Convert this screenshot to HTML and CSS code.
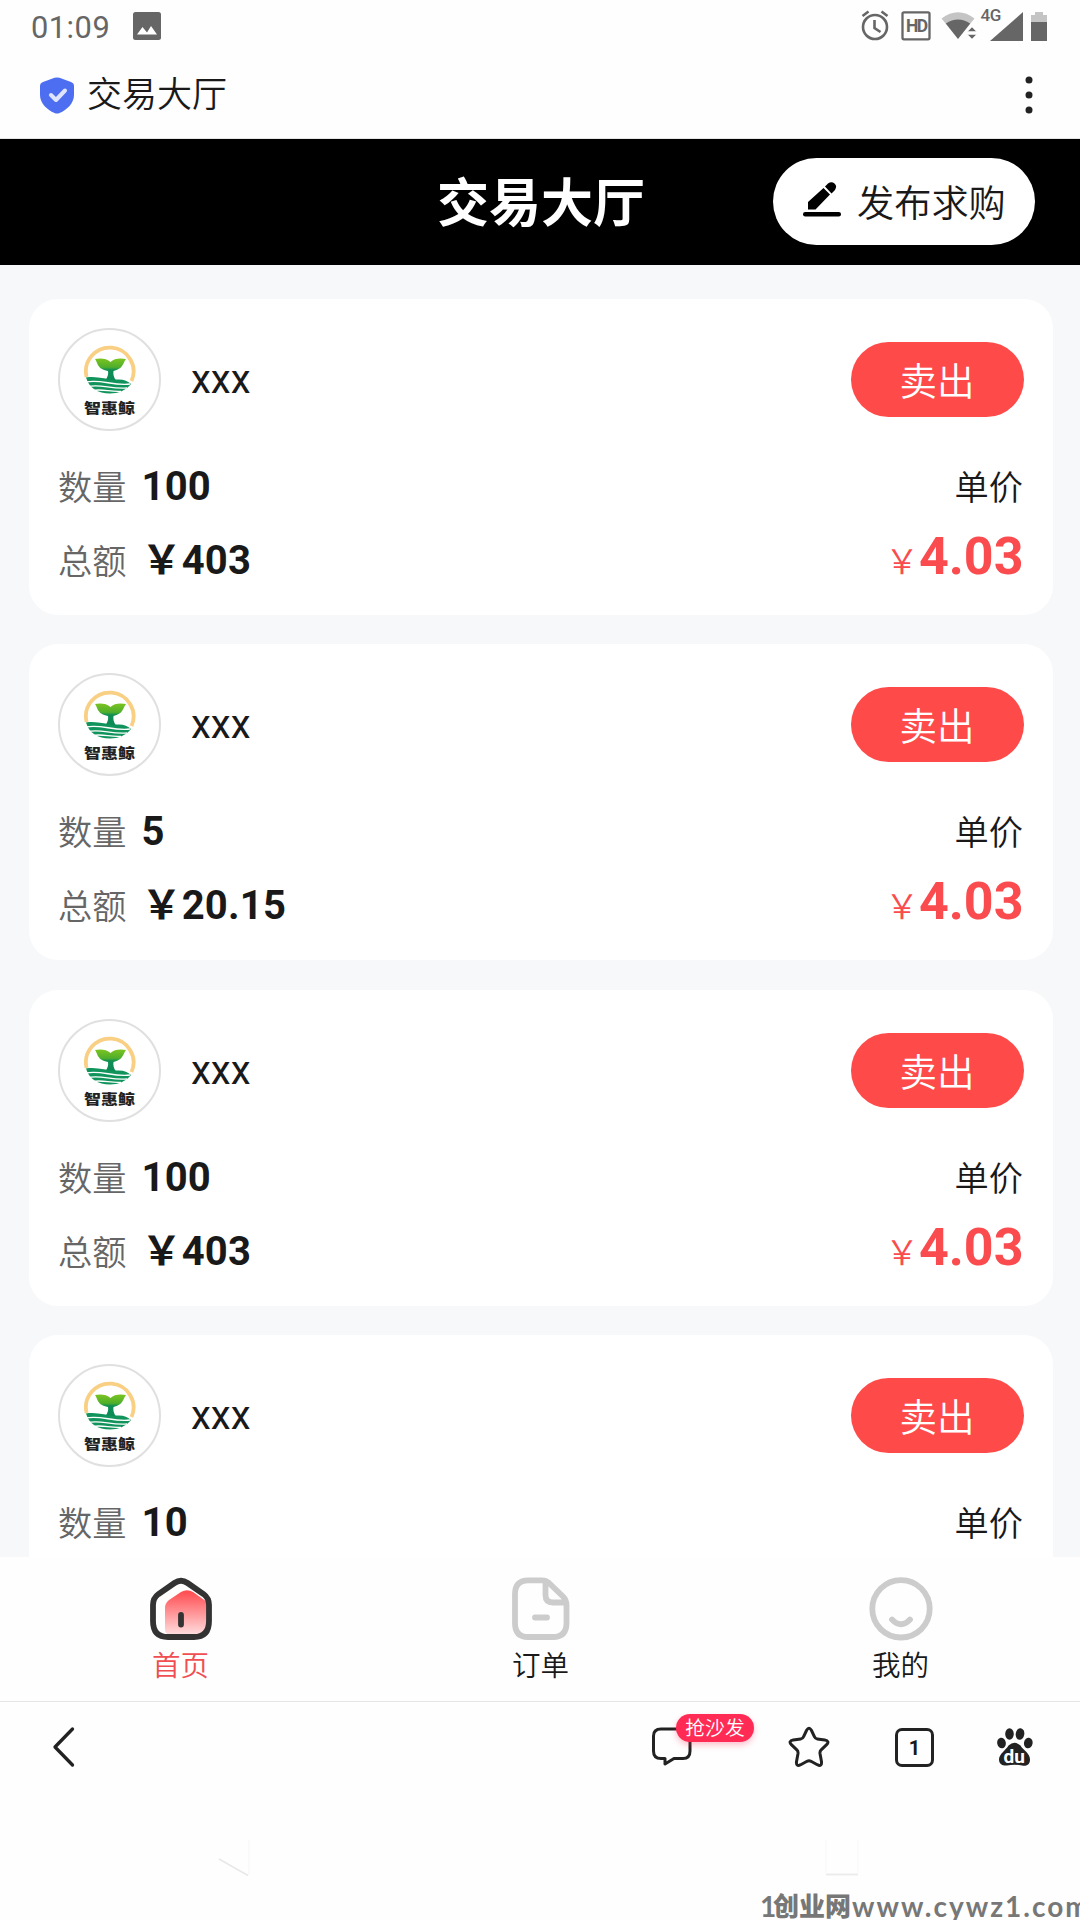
FILE: index.html
```html
<!DOCTYPE html>
<html lang="zh-CN">
<head>
<meta charset="utf-8">
<title>交易大厅</title>
<link rel="stylesheet" href="styles.css">
</head>
<body>
<svg class="defs" width="0" height="0" aria-hidden="true">
  <defs>
    <linearGradient id="leaf" x1="0" y1="0" x2="0" y2="1"><stop offset="0" stop-color="#7cc420"/><stop offset=".4" stop-color="#4fae2c"/><stop offset=".52" stop-color="#0f8f55"/><stop offset="1" stop-color="#0a8a55"/></linearGradient>
    <linearGradient id="roof" x1="0" y1="0" x2="0" y2="1"><stop offset=".05" stop-color="#ff5054"/><stop offset="1" stop-color="#ffdfe0"/></linearGradient>
    <symbol id="logo" viewBox="0 0 54 52">
      <path d="M3.600 35A23.800 23.800 0 1 1 48.500 39" fill="none" stroke="#f9cf83" stroke-width="3.800"/>
      <path d="M3 35.500C14 33.500 24 38 34 37.500C40 37 45 39 48 42C43 48.500 35 51.500 27 51.500C15 51.500 6 46 3 35.500Z" fill="#11935c"/>
      <path d="M3 40C18 37 30 44 47 42M5 44.500C18 41.500 28 47.500 44 46M10 48.500C19 46.500 28 50.300 38 49.300" fill="none" stroke="#fff" stroke-width="1.300"/>
      <path d="M12 17C16 16 24 16 27.500 20C31 16 38 16 43 17C40 21 40 27 30.500 29C30 32 30.500 35 33 38.500L23 37.500C25 34 25.500 32 25 29C14 27 15 21 12 17Z" fill="url(#leaf)"/>
    </symbol>
  </defs>
</svg>
<div class="screen">
  <header class="status">
    <span class="clock">01:09</span>
    <svg class="photo" width="28" height="28" viewBox="0 0 28 28"><rect width="28" height="28" rx="2.500" fill="#666"/><path d="M4 22.500 9.500 15l4.500 5.500L18 14l6 8.500Z" fill="#fff"/></svg>
    <svg class="signals" width="190" height="40" viewBox="0 0 190 40">
      <g fill="none" stroke="#666" stroke-width="2.600"><circle cx="15" cy="23" r="12"/><path d="M14.500 16v8l6 4M2.500 12l6-4.500M21.500 7.500l6 4.500"/><rect x="42.500" y="8.300" width="27" height="27" rx="1.500" stroke-width="2.300"/></g>
      <text x="46" y="28" class="hd">HD</text>
      <path d="M81.500 14.500Q98 2 114.500 14.500L98 34.500Z" fill="#c4c4c4"/><path d="M85.800 19.500Q98 11.500 110.200 19.500L98 35Z" fill="#666"/>
      <path d="M107.500 27.500l4.500-4.500 4.500 4.500zM107.500 30.500l4.500 4.500 4.500-4.500z" fill="#666" stroke="#fff" stroke-width=".5"/>
      <text x="120.500" y="17" class="net">4G</text>
      <path d="M163 8v29h-33Z" fill="#666"/>
      <path d="M171 11h4V8h8v3h4v9h-16Z" fill="#c4c4c4"/><path d="M171 18h16v19h-16Z" fill="#666"/>
    </svg>
  </header>
  <div class="browser-title">
    <svg width="34" height="37" viewBox="0 0 34 37"><path d="M14.500 .8Q17 0 19.500 .8L31 5Q34 6.200 34 9V18C34 26 27 33 19.500 36Q17 37 14.500 36C7 33 0 26 0 18V9Q0 6.200 3 5Z" fill="#4e6ef2"/><path d="M11 18l5 5 9-9.500" fill="none" stroke="#dfe5ff" stroke-width="4" stroke-linecap="round" stroke-linejoin="round"/></svg>
    <span class="site">交易大厅</span>
    <svg class="more" width="8" height="38" viewBox="0 0 8 38" fill="#222"><circle cx="4" cy="4" r="3.500"/><circle cx="4" cy="19" r="3.500"/><circle cx="4" cy="34" r="3.500"/></svg>
  </div>
  <div class="app-bar">
    <h1>交易大厅</h1>
    <button class="publish">
      <svg width="38" height="36" viewBox="0 0 38 36"><rect y="30" width="38" height="4.500" rx="2.200"/><path d="M5 27.500V20L20.500 6 27 12.500 12.500 27.500ZM22 4.500 25 1.500Q28.500-.8 31.500 1.500T32 8L28.500 11.500Z"/></svg>
      <span>发布求购</span>
    </button>
  </div>
  <main class="list">
    <article class="card">
      <div class="seller"><div class="avatar"><svg width="54" height="52"><use href="#logo"/></svg><b>智惠鲸</b></div><span class="name">xxx</span><button class="sell">卖出</button></div>
      <div class="line"><span class="label">数量</span><b>100</b><span class="unit">单价</span></div>
      <div class="line"><span class="label">总额</span><b>￥403</b><span class="price"><i>￥</i>4.03</span></div>
    </article>
    <article class="card">
      <div class="seller"><div class="avatar"><svg width="54" height="52"><use href="#logo"/></svg><b>智惠鲸</b></div><span class="name">xxx</span><button class="sell">卖出</button></div>
      <div class="line"><span class="label">数量</span><b>5</b><span class="unit">单价</span></div>
      <div class="line"><span class="label">总额</span><b>￥20.15</b><span class="price"><i>￥</i>4.03</span></div>
    </article>
    <article class="card">
      <div class="seller"><div class="avatar"><svg width="54" height="52"><use href="#logo"/></svg><b>智惠鲸</b></div><span class="name">xxx</span><button class="sell">卖出</button></div>
      <div class="line"><span class="label">数量</span><b>100</b><span class="unit">单价</span></div>
      <div class="line"><span class="label">总额</span><b>￥403</b><span class="price"><i>￥</i>4.03</span></div>
    </article>
    <article class="card">
      <div class="seller"><div class="avatar"><svg width="54" height="52"><use href="#logo"/></svg><b>智惠鲸</b></div><span class="name">xxx</span><button class="sell">卖出</button></div>
      <div class="line"><span class="label">数量</span><b>10</b><span class="unit">单价</span></div>
    </article>
  </main>
  <nav class="tabs">
    <a class="tab active">
      <svg width="64" height="64" viewBox="0 0 64 64"><path d="M16 31Q16 26 20 23L32 15Q38 11.500 44 15L58 25V50Q58 58 50 58H22Q16 58 16 52Z" fill="url(#roof)"/><path d="M25.500 6Q32 1.500 38.500 6L54.500 17Q60 21 60 28V44Q60 60 45 60H19Q4 60 4 44V28Q4 21 9.500 17Z" fill="none" stroke="#333" stroke-width="5.800"/><path d="M32 38v9.500" stroke="#333" stroke-width="5.800" stroke-linecap="round"/></svg>
      <span>首页</span>
    </a>
    <a class="tab">
      <svg width="64" height="64" viewBox="0 0 64 64" fill="none" stroke="#ccc" stroke-width="5.800" stroke-linejoin="round" stroke-linecap="round"><path d="M19 3.300H33Q37 3.300 40 6L54 19.500Q57.500 23 57.500 28V46Q57.500 60 44 60H19Q6 60 6 46V17Q6 3.300 19 3.300ZM36.500 5V18Q36.500 25.500 44 25.500H56M26 40.500H38"/></svg>
      <span>订单</span>
    </a>
    <a class="tab">
      <svg width="64" height="64" viewBox="0 0 64 64" fill="none" stroke="#ccc" stroke-width="5.800" stroke-linecap="round"><circle cx="32" cy="31.800" r="28.700"/><path d="M23 42.500Q32 52 41 42.500"/></svg>
      <span>我的</span>
    </a>
  </nav>
  <footer class="toolbar">
    <svg class="back" width="24" height="42" viewBox="0 0 24 42"><path d="M20.500 3 3 21 20.500 39" fill="none" stroke="#222" stroke-width="3.300" stroke-linecap="round" stroke-linejoin="round"/></svg>
    <div class="comment">
      <svg width="40" height="40" viewBox="0 0 40 40"><path d="M9 2H31Q38 2 38 9V24Q38 31.500 31 31.500H22L13 37V31.500H9Q1.500 31.500 1.500 24V9Q1.500 2 9 2Z" fill="none" stroke="#222" stroke-width="3" stroke-linejoin="round"/></svg>
      <span class="badge">抢沙发</span>
    </div>
    <svg class="star" width="42" height="42" viewBox="0 0 42 42"><path d="M18.600 4.300Q21 .3 23.400 4.300L26.500 10.800Q27.300 12.800 29.300 13.100L36.800 14.100Q42 15 38.600 18.700L33.200 23.800Q31.700 25.300 32 27.400L33.500 35.800Q34 41 29.300 38.700L23 35.300Q21 34.300 19 35.300L12.700 38.700Q8 41 8.500 35.800L10 27.400Q10.300 25.300 8.800 23.800L3.400 18.700Q0 15 5.200 14.100L12.700 13.100Q14.700 12.800 15.500 10.800Z" fill="none" stroke="#222" stroke-width="3"/></svg>
    <div class="pages">1</div>
    <svg class="paw" width="36" height="40" viewBox="0 0 36 40" fill="#222"><ellipse cx="4.500" cy="16" rx="4.300" ry="5.300" transform="rotate(-10 4.500 16)"/><ellipse cx="12.500" cy="7" rx="4.300" ry="5.800"/><ellipse cx="23" cy="7" rx="4.300" ry="5.800" transform="rotate(8 23 7)"/><ellipse cx="31.300" cy="16" rx="4.300" ry="5.300" transform="rotate(10 31.300 16)"/><path d="M11.500 18.500Q17.500 13 23.500 18.500C26 23 33 26 33 32.500S28 39 25 38.500Q17.500 37 10 38.500C7 39 2 38 2 32.500S9 23 11.500 18.500Z"/><text x="6.500" y="35.500" class="du">du</text></svg>
  </footer>
  <div class="system-nav">
    <svg width="34" height="40" viewBox="0 0 34 40"><path d="M1 19 30 35.500" fill="none" stroke="#e8e8e8" stroke-width="1.500"/><path d="M31 0V35" stroke="#f8f8f8" stroke-width="1.500"/></svg>
    <svg width="34" height="40" viewBox="0 0 34 40"><path d="M1 0V33M33 0V33" stroke="#fafafa" stroke-width="1.500"/><path d="M1 34.500H33" stroke="#ebebeb" stroke-width="1.800"/></svg>
  </div>
  <div class="watermark"><span class="wm-one">1</span><span class="wm-cn">创业网</span><span class="wm-url">www.cywz1.com</span></div>
</div>
</body>
</html>
```
FILE: styles.css
```css
* { box-sizing: border-box; }
body { margin: 0; background: #fdfdfd; font-family: Roboto, "Noto Sans CJK SC", sans-serif; font-weight: 350; color: #191919; }
h1, button { margin: 0; border: 0; padding: 0; font: inherit; color: inherit; }
svg { display: block; flex: none; }
.defs { position: absolute; }
.screen { position: relative; width: 1080px; height: 1920px; overflow: hidden; display: flex; flex-direction: column; background: #fefefe; }
.screen > * { flex: none; }

.status { height: 54px; display: flex; align-items: center; padding: 0 30px 0 31px; color: #666; }
.clock { font-size: 30.800px; letter-spacing: 0.500px; font-weight: 400; width: 102px; line-height: 52px; padding-top: 2px; }
.photo { margin-top: -2px; }
.signals { margin-left: auto; margin-top: 4px; align-self: flex-start; }
.hd { font: 700 17.500px Roboto, sans-serif; fill: #666; letter-spacing: -1.500px; }
.net { font: 500 17px Roboto, sans-serif; fill: #666; letter-spacing: -.5px; }

.browser-title { height: 85px; display: flex; align-items: center; padding: 0 47px 0 40px; border-bottom: 1px solid #e5e5e5; }
.browser-title > svg { margin-top: -2px; }
.site { font-size: 35px; line-height: 50px; margin-left: 13px; }
.more { margin-left: auto; width: 8px; }

.app-bar { height: 126px; background: #000; display: grid; grid-template-columns: 1fr 208px 1fr; align-items: center; }
h1 { grid-column: 2; font-size: 52px; line-height: 76px; font-weight: 700; color: #fff; white-space: nowrap; padding: 6px 0 0 1px; }
.publish { justify-self: end; margin-right: 45px; width: 262px; height: 87px; border-radius: 44px; background: #fff; display: flex; align-items: center; gap: 16px; padding-left: 30px; font-size: 37.200px; margin-top: -2px; }
.publish svg { fill: #000; margin-top: -2px; }

.list { height: 1292px; overflow: hidden; background: #f7f8fa; padding: 33.500px 27px 0 29px; display: flex; flex-direction: column; gap: 29.600px; }
.card { flex: none; height: 316px; border-radius: 29px; background: #fff; padding: 28.700px 29.500px 0 29px; }
.seller { height: 104px; display: flex; align-items: center; margin-bottom: 19.500px; }
.avatar { width: 103px; height: 103px; border: 2px solid #e0e0e0; border-radius: 50%; display: flex; flex-direction: column; align-items: center; padding-top: 12px; }
.avatar b { font-size: 17px; line-height: 18px; font-weight: 900; margin-top: 5px; color: #222; transform: scaleY(.8); }
.name { font-size: 40px; margin-left: 30px; font-weight: 400; }
.sell { margin-left: auto; width: 173px; height: 75px; border-radius: 38px; background: #ff4a4a; color: #fff; font-size: 37.500px; padding-bottom: 2px; }
.line { height: 70px; display: flex; align-items: baseline; line-height: 72px; font-size: 34.200px; }
.label { color: #666; width: 83.500px; }
.line b { font-size: 40px; font-weight: 700; letter-spacing: .2px; }
.unit { margin-left: auto; margin-right: .5px; }
.price { margin-left: auto; color: #fa4b4e; font-size: 52px; font-weight: 700; }
.price i { font-style: normal; font-weight: 350; font-size: 34px; }

.tabs { height: 145px; display: grid; grid-template-columns: repeat(3, 1fr); border-bottom: 1px solid #e5e5e5; }
.tab { display: flex; flex-direction: column; align-items: center; gap: 3px; padding: 20px 0 0 1px; font-size: 28.500px; line-height: 46px; }
.active { color: #f04e52; }

.toolbar { height: 90px; display: flex; align-items: center; padding: 0 31px 0 52px; }
.comment { position: relative; margin-left: 576px; }
.badge { position: absolute; left: 24px; top: -13px; width: 78px; height: 28px; border-radius: 14px; background: #ff2b55; color: #fff; font-size: 19.800px; line-height: 29px; text-align: center; box-shadow: 0 3px 6px rgba(255, 43, 85, .3); }
.star { margin-left: 96px; }
.pages { width: 39px; height: 39px; margin-left: 65px; border: 3px solid #222; border-radius: 7px; font: 700 20px/35px Roboto, sans-serif; text-align: center; }
.paw { margin-left: 63px; }
.du { font: 700 19px Roboto, sans-serif; fill: #fff; }

.system-nav { flex: 1; display: flex; justify-content: space-between; padding: 48px 221px 0 218px; }
.watermark { position: absolute; left: 760px; top: 1887px; display: flex; line-height: 38px; color: #777; font-family: Lato, "Noto Sans CJK SC", sans-serif; font-size: 28px; font-weight: 700; white-space: nowrap; }
.wm-one { width: 13px; }
.wm-cn { width: 79px; font-size: 26px; font-weight: 900; }
.wm-url { letter-spacing: 2px; }
```
